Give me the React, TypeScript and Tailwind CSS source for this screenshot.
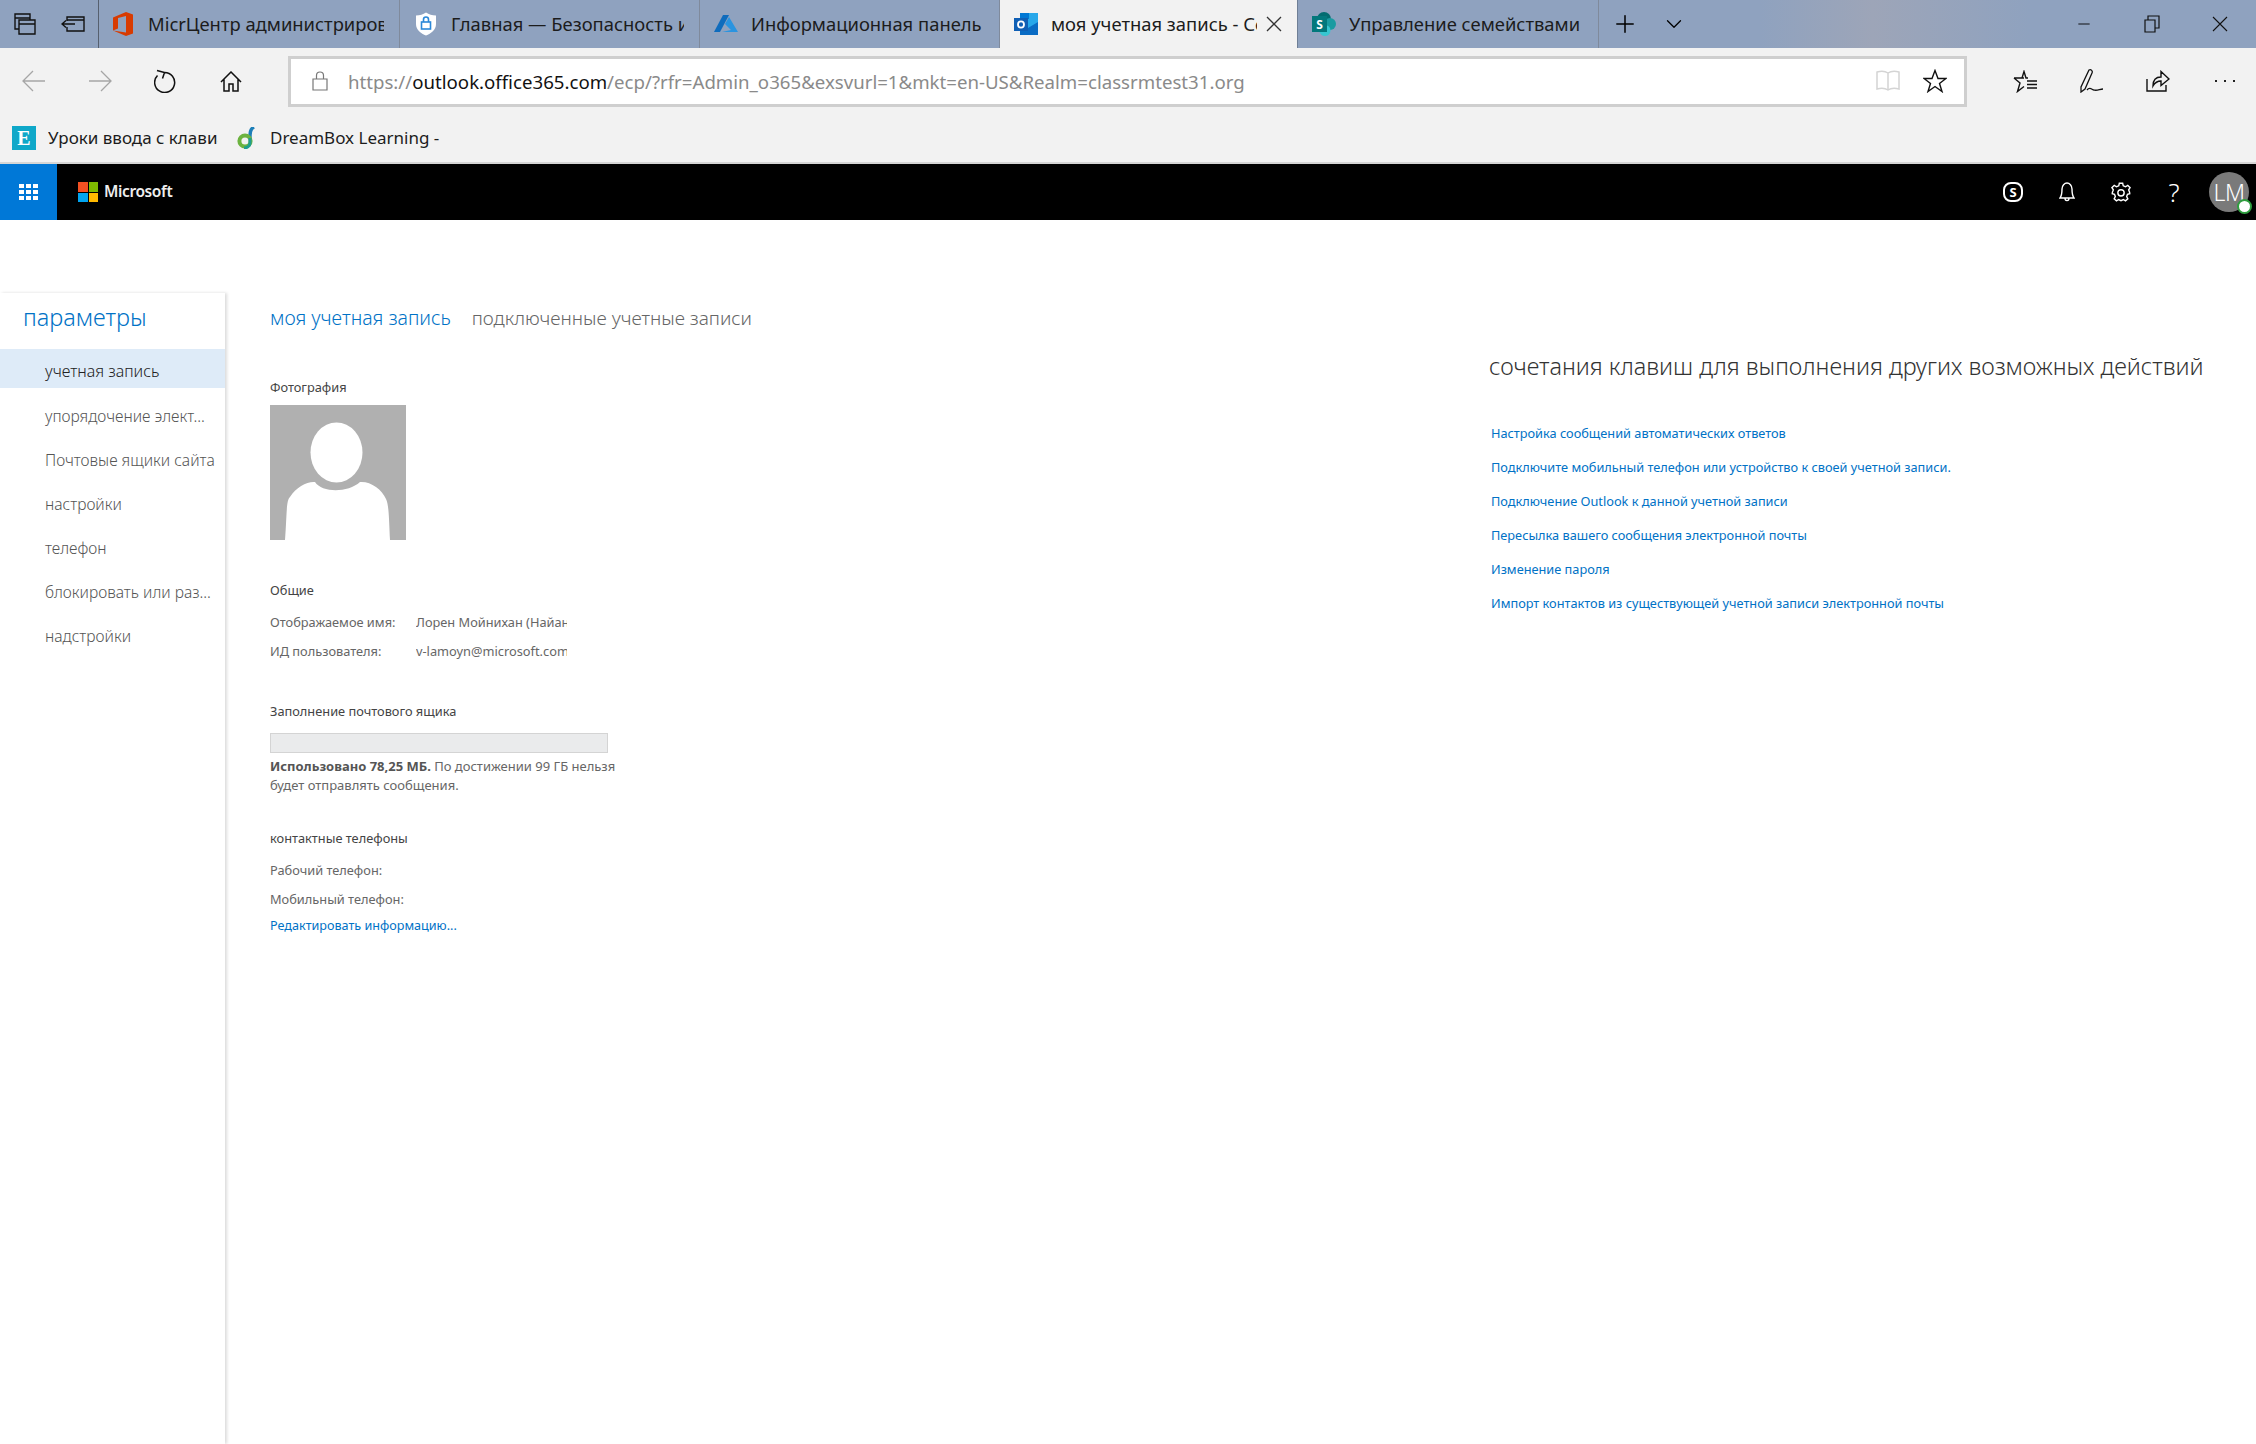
import React from 'react';
import { Plus, ChevronDown, Minus } from 'lucide-react';

const NAV_ITEMS = ['учетная запись', 'упорядочение элект...', 'Почтовые ящики сайта', 'настройки', 'телефон', 'блокировать или раз...', 'надстройки'];

const LINKS = [
  'Настройка сообщений автоматических ответов',
  'Подключите мобильный телефон или устройство к своей учетной записи.',
  'Подключение Outlook к данной учетной записи',
  'Пересылка вашего сообщения электронной почты',
  'Изменение пароля',
  'Импорт контактов из существующей учетной записи электронной почты',
];

const OfficeIcon = () => (
  <svg width="20" height="24" viewBox="0 0 20 24"><path d="M0 5.5 L13 0 L20 2.5 V21.5 L13 24 L0 18.5 L13 20.5 V4 L5 6 V16.5 L0 18.5 Z" fill="#d83b01" /></svg>
);

const ShieldIcon = () => (
  <svg width="22" height="24" viewBox="0 0 22 24">
    <path d="M11 0.5 C14 2.5 17 3.5 21 3.5 V12 C21 18 16 21.5 11 23.5 C6 21.5 1 18 1 12 V3.5 C5 3.5 8 2.5 11 0.5 Z" fill="#fff" />
    <rect x="6.5" y="10" width="9" height="7" fill="none" stroke="#2b88d8" strokeWidth="1.6" />
    <path d="M8.5 10 V7.5 a2.5 2.5 0 0 1 5 0 V10" fill="none" stroke="#2b88d8" strokeWidth="1.6" />
  </svg>
);

const AzureIcon = () => (
  <svg width="24" height="18" viewBox="0 0 24 18"><path d="M9 0 H15 L6 17 H0 Z" fill="#0f6cbd" /><path d="M15 2 L24 17 H8 L17 15 L11 9 Z" fill="#2a94e0" /></svg>
);

const OutlookIcon = () => (
  <svg width="24" height="22" viewBox="0 0 24 22">
    <rect x="6" y="0" width="18" height="22" fill="#28a8ea" />
    <rect x="6" y="0" width="9" height="6" fill="#0078d4" />
    <path d="M24 9 L14 15 L6 10 V22 H24 Z" fill="#0a6cc4" />
    <rect x="0" y="5" width="14" height="13" fill="#0f5fb5" />
    <ellipse cx="7" cy="11.5" rx="3" ry="3.2" fill="none" stroke="#fff" strokeWidth="1.8" />
  </svg>
);

const SharepointIcon = () => (
  <svg width="24" height="24" viewBox="0 0 24 24">
    <circle cx="12" cy="7" r="7" fill="#036c70" />
    <circle cx="18" cy="12" r="6" fill="#1a9ba1" />
    <circle cx="13" cy="18.5" r="5.5" fill="#37c6d0" />
    <rect x="0" y="4" width="15" height="16" fill="#03787c" />
    <text x="7.5" y="16.5" fontSize="12" fontWeight="700" fill="#fff" textAnchor="middle" fontFamily="Open Sans, sans-serif">S</text>
  </svg>
);

const MsLogo = () => (
  <div className="grid grid-cols-2 gap-px w-[20px] h-[20px]">
    <div className="bg-[#f25022]" />
    <div className="bg-[#7fba00]" />
    <div className="bg-[#00a4ef]" />
    <div className="bg-[#ffb900]" />
  </div>
);

const Tab = ({ icon, label, width, active }: { icon: React.ReactNode; label: string; width: string; active?: boolean }) => (
  <div className={`${width} h-full flex items-center shrink-0 border-r ${active ? 'bg-[#f2f2f2] border-[#6f7f96]' : 'border-[#7f8a9c]'}`}>
    <span className="w-[28px] flex justify-center shrink-0">{icon}</span>
    <span className={`ml-[11px] text-[18.4px] text-[#1c1c1c] whitespace-nowrap overflow-hidden flex-1 ${active ? '' : 'mr-[15px]'}`}>{label}</span>
    {active && (
      <svg className="ml-[9px] mr-[15px] shrink-0" width="16" height="16" viewBox="0 0 16 16" fill="none" stroke="#333" strokeWidth="1.3"><path d="M1 1 L15 15 M15 1 L1 15" /></svg>
    )}
  </div>
);

const App: React.FC = () => {
  return (
    <div className="w-[2256px] h-[1444px] overflow-hidden bg-white flex flex-col font-['Noto_Sans',sans-serif]">
      {/* window tabs */}
      <div className="h-[48px] flex items-center bg-[linear-gradient(90deg,#8fa2bf_0%,#8fa2bf_78%,#9da5b8_83%,#8fa2bf_90%,#8fa2bf_100%)] shrink-0">
        <div className="w-[99px] h-full flex items-center pl-[14px] border-r border-[#56606f] shrink-0">
          <svg width="22" height="22" viewBox="0 0 22 22" fill="none" stroke="#111" strokeWidth="1.4">
            <path d="M5 16 H1 V1 H16 V7 M1 5 H16" />
            <path d="M5 7 H21 V21 H5 Z M5 11 H21" />
          </svg>
          <svg className="ml-[25px]" width="24" height="16" viewBox="0 0 24 16" fill="none" stroke="#111" strokeWidth="1.4">
            <path d="M6 5 V1 H23 V15 H6 V11 M6 4 H23" />
            <path d="M14 8 H1 M5 4.5 L1 8 L5 11.5" />
          </svg>
        </div>
        <Tab icon={<OfficeIcon />} label="MicrЦентр администрирование" width="w-[301px] pl-[10px]" />
        <Tab icon={<ShieldIcon />} label="Главная — Безопасность и соблюдение" width="w-[300px] pl-[12px]" />
        <Tab icon={<AzureIcon />} label="Информационная панель" width="w-[300px] pl-[12px]" />
        <Tab icon={<OutlookIcon />} label="моя учетная запись - Сервер" width="w-[298px] pl-[12px]" active />
        <Tab icon={<SharepointIcon />} label="Управление семействами" width="w-[301px] pl-[12px]" />
        <Plus className="ml-[12px] text-black" size={28} strokeWidth={1.3} />
        <ChevronDown className="ml-[22px] text-black" size={26} strokeWidth={1.2} />
        <div className="ml-auto flex items-center text-black">
          <Minus size={18} strokeWidth={1.2} />
          <svg className="ml-[51px]" width="16" height="18" viewBox="0 0 16 18" fill="none" stroke="#111" strokeWidth="1.2"><path d="M1 5 H11 V17 H1 Z M4 5 V1 H15 V13 H11" /></svg>
          <svg className="ml-[52px] mr-[28px]" width="16" height="16" viewBox="0 0 16 16" fill="none" stroke="#111" strokeWidth="1.1"><path d="M1 1 L15 15 M15 1 L1 15" /></svg>
        </div>
      </div>

      {/* address bar */}
      <div className="h-[66px] bg-[#f2f2f2] flex items-center shrink-0">
        <svg className="ml-[22px]" width="24" height="24" viewBox="0 0 24 24" fill="none" stroke="#a6a6a6" strokeWidth="1.3"><path d="M1 12 H23 M11 2 L1 12 L11 22" /></svg>
        <svg className="ml-[42px]" width="24" height="24" viewBox="0 0 24 24" fill="none" stroke="#a6a6a6" strokeWidth="1.3"><path d="M1 12 H23 M13 2 L23 12 L13 22" /></svg>
        <svg className="ml-[42px]" width="22" height="24" viewBox="0 0 22 24" fill="none" stroke="#111" strokeWidth="1.5"><path d="M10.5 3.5 A10 10 0 1 1 3.5 6.5 M3 1.5 L10.5 3.5 L8.5 9.5" /></svg>
        <svg className="ml-[44px]" width="22" height="21" viewBox="0 0 22 21" fill="none" stroke="#111" strokeWidth="1.5"><path d="M1 11 L11 1 L21 11 M4 8 V20 H9 V13 H13 V20 H18 V8" /></svg>
        <div className="ml-[46px] w-[1679px] h-[51px] bg-white border-[3px] border-[#cfcfcf] flex items-center">
          <svg className="ml-[21px]" width="16" height="20" viewBox="0 0 16 20" fill="none" stroke="#777" strokeWidth="1.2"><path d="M1 8 H15 V19 H1 Z M4.5 8 V4.5 a3.5 3.5 0 0 1 7 0 V8" /></svg>
          <div className="ml-[20px] pt-[2px] text-[18.65px] text-[#8a8a8a] whitespace-nowrap">
            https://<span className="text-[#111]">outlook.office365.com</span>/ecp/?rfr=Admin_o365&amp;exsvurl=1&amp;mkt=en-US&amp;Realm=classrmtest31.org
          </div>
          <svg className="ml-auto" width="24" height="22" viewBox="0 0 24 22" fill="none" stroke="#d4d4d4" strokeWidth="1.5"><path d="M12 3 C9 1 5 1 1 2 V19 C5 18 9 18 12 20 C15 18 19 18 23 19 V2 C19 1 15 1 12 3 Z M12 3 V20" /></svg>
          <svg className="ml-[23px] mr-[17px]" width="24" height="24" viewBox="0 0 24 24" fill="none" stroke="#111" strokeWidth="1.4"><path d="M12 1.5 L15 9.5 H23 L16.5 14.5 L19 22.5 L12 17.5 L5 22.5 L7.5 14.5 L1 9.5 H9 Z" /></svg>
        </div>
        <svg className="ml-[46px]" width="24" height="23" viewBox="0 0 24 23" fill="none" stroke="#111" strokeWidth="1.4"><path d="M11 8 H9 L11 1.5 L13 8 H15 M1 8 H9 M1 8 L7 13 L4.5 21.5 L11 16.5 M14 11 H24 M14 14.5 H24 M14 18 H24" /></svg>
        <svg className="ml-[43px]" width="24" height="24" viewBox="0 0 24 24" fill="none" stroke="#111" strokeWidth="1.3"><path d="M9 1 C11 0 13 2 12 4 L5 20 L1 23 L1 18 Z M7 21 C10 17 12 21 14 21 C17 22 20 20 23 20" /></svg>
        <svg className="ml-[42px]" width="24" height="22" viewBox="0 0 24 22" fill="none" stroke="#111" strokeWidth="1.4"><path d="M1 9 V21 H20 V15 M7 16 C7 10 10 7 15 7 V1.5 L23 9 L15 15.5 V11 C11 11 9 12.5 7 16 Z" /></svg>
        <div className="ml-[45px] w-[20px] flex justify-between">
          <div className="w-[2px] h-[2px] bg-[#222]" />
          <div className="w-[2px] h-[2px] bg-[#222]" />
          <div className="w-[2px] h-[2px] bg-[#222]" />
        </div>
      </div>

      {/* favorites */}
      <div className="h-[50px] bg-[#f2f2f2] border-b-2 border-[#d6d6d6] flex items-center shrink-0">
        <div className="ml-[12px] w-[24px] h-[24px] bg-[#0fa8c9] flex items-center justify-center text-white font-bold text-[20px] leading-none font-['Liberation_Serif',serif]">E</div>
        <span className="ml-[12px] w-[170px] text-[17px] text-[#1c1c1c] overflow-hidden whitespace-nowrap">Уроки ввода с клавиатуры</span>
        <svg className="ml-[19px]" width="18" height="22" viewBox="0 0 18 22" fill="none">
          <path d="M17 0 C13 2 13 6 13 12" stroke="#1d7fb8" strokeWidth="3.4" />
          <circle cx="8" cy="14" r="5.6" stroke="#6cb33f" strokeWidth="4" />
          <path d="M13 11 V16 C13 19 10 21 7 21" stroke="#1f9e8f" strokeWidth="3" />
        </svg>
        <span className="ml-[15px] text-[17px] text-[#1c1c1c] whitespace-nowrap">DreamBox Learning -</span>
      </div>

      {/* suite bar */}
      <div className="h-[56px] bg-black flex items-center shrink-0">
        <div className="w-[57px] h-full bg-[#0078d7] flex items-center justify-center">
          <div className="grid grid-cols-3 gap-[2px]">
            {Array.from({ length: 9 }).map((_, i) => (
              <div key={i} className="w-[5px] h-[4px] bg-white" />
            ))}
          </div>
        </div>
        <div className="ml-[21px]"><MsLogo /></div>
        <span className="ml-[6px] text-[15.5px] font-semibold text-[#eeeeee] tracking-tight">Microsoft</span>
        <div className="ml-auto flex items-center text-white">
          <div className="w-[20px] h-[20px] rounded-[8px] border-2 border-white flex items-center justify-center text-[13px] font-bold leading-none">S</div>
          <svg className="ml-[36px]" width="16" height="20" viewBox="0 0 16 20" fill="none" stroke="#fff" strokeWidth="1.4"><path d="M1 16 C2.5 14 3 12 3 7 C3 3.5 5.5 1 8 1 C10.5 1 13 3.5 13 7 C13 12 13.5 14 15 16 Z M6 16 C6 19.5 10 19.5 10 16" /></svg>
          <svg className="ml-[36px]" width="20" height="20" viewBox="0 0 24 24" fill="none" stroke="#fff" strokeWidth="1.7"><path d="M10 1.5 H14 L14.7 4.6 L17.4 5.7 L20.1 4 L22.9 6.8 L21.2 9.5 L22.3 12.2 L22.5 14 L19.8 14.8 L18.8 17.4 L20.2 20.2 L17.4 22.6 L14.8 21 L12 22.4 L9.2 21 L6.6 22.6 L3.8 20.2 L5.2 17.4 L4.2 14.8 L1.5 14 L1.7 12.2 L2.8 9.5 L1.1 6.8 L3.9 4 L6.6 5.7 L9.3 4.6 Z" /><circle cx="12" cy="13" r="3.8" /></svg>
          <span className="ml-[37px] w-[12px] text-[26px] font-light leading-none text-center">?</span>
          <div className="ml-[29px] mr-[7px] w-[40px] h-[40px] rounded-full bg-[#7a7a7a] flex items-center justify-center text-[23px] font-light tracking-tight relative">
            LM
            <div className="absolute right-[-3px] bottom-[-2px] w-[15px] h-[15px] rounded-full bg-white border-2 border-[#2f9e3f]" />
          </div>
        </div>
      </div>

      {/* page */}
      <div className="flex-1 flex pt-[73px] min-h-0">
        <div className="w-[225px] shrink-0 shadow-[2px_0_3px_rgba(0,0,0,0.14)]">
          <div className="pl-[23px] h-[50px] mb-[6px] flex items-center text-[23.5px] font-light text-[#0072c6]">параметры</div>
          <div>
            {NAV_ITEMS.map((item, i) => (
              <div key={item} className={`pl-[45px] flex items-center font-light whitespace-nowrap ${i === 0 ? 'bg-[#deebf8] text-[#222] h-[39px] pt-[4px] mb-[7px] text-[16px]' : 'h-[44px] text-[#555] text-[15.6px]'}`}>
                {item}
              </div>
            ))}
          </div>
        </div>

        <div className="w-[1264px] pl-[45px] shrink-0">
          <div className="h-[50px] flex items-center font-light gap-[21px]">
            <span className="text-[19.5px] text-[#0072c6]">моя учетная запись</span>
            <span className="text-[19px] text-[#666]">подключенные учетные записи</span>
          </div>
          <div className="mt-[35px] text-[12.8px] text-[#444] leading-[18px]">Фотография</div>
          <svg className="mt-[9px]" width="136" height="135" viewBox="0 0 136 135">
            <rect width="136" height="135" fill="#b0b0b0" />
            <ellipse cx="66.5" cy="47.5" rx="26" ry="30" fill="#fff" />
            <path d="M15 135 C17 110 16 95 20 92 C26 82 38 76 45 77 C52 88 78 88 90 77 C100 76 112 84 116 94 C119 100 119 115 120 135 Z" fill="#fff" />
          </svg>
          <div className="mt-[41px] text-[12.8px] text-[#444] leading-[18px]">Общие</div>
          <div className="mt-[14px] flex text-[12.8px] text-[#666] leading-[18px]">
            <span className="w-[146px]">Отображаемое имя:</span>
            <span className="w-[151px] overflow-hidden whitespace-nowrap">Лорен Мойнихан (Найант)</span>
          </div>
          <div className="mt-[11px] flex text-[12.8px] text-[#666] leading-[18px]">
            <span className="w-[146px]">ИД пользователя:</span>
            <span className="w-[151px] overflow-hidden whitespace-nowrap">v-lamoyn@microsoft.com</span>
          </div>
          <div className="mt-[42px] text-[12.8px] text-[#444] leading-[18px]">Заполнение почтового ящика</div>
          <div className="mt-[13px] w-[338px] h-[20px] bg-[#eaebec] border border-[#d4d4d4]" />
          <div className="mt-[4px] w-[356px] text-[13px] text-[#666] leading-[19px]">
            <span className="font-bold text-[#555]">Использовано 78,25 МБ.</span> По достижении 99 ГБ нельзя будет отправлять сообщения.
          </div>
          <div className="mt-[34px] text-[12.8px] text-[#444] leading-[18px]">контактные телефоны</div>
          <div className="mt-[14px] text-[12.8px] text-[#666] leading-[18px]">Рабочий телефон:</div>
          <div className="mt-[11px] text-[12.8px] text-[#666] leading-[18px]">Мобильный телефон:</div>
          <div className="mt-[9px] text-[12.6px] text-[#0072c6] leading-[18px]">Редактировать информацию...</div>
        </div>

        <div className="flex-1 pt-[57px]">
          <div className="text-[23.4px] font-light text-[#333] leading-[32px] whitespace-nowrap">сочетания клавиш для выполнения других возможных действий</div>
          <div className="mt-[42px] pl-[2px] flex flex-col gap-[16px]">
            {LINKS.map((link) => (
              <div key={link} className="text-[12.75px] text-[#0072c6] leading-[18px] whitespace-nowrap">{link}</div>
            ))}
          </div>
        </div>
      </div>
    </div>
  );
};

export default App;
